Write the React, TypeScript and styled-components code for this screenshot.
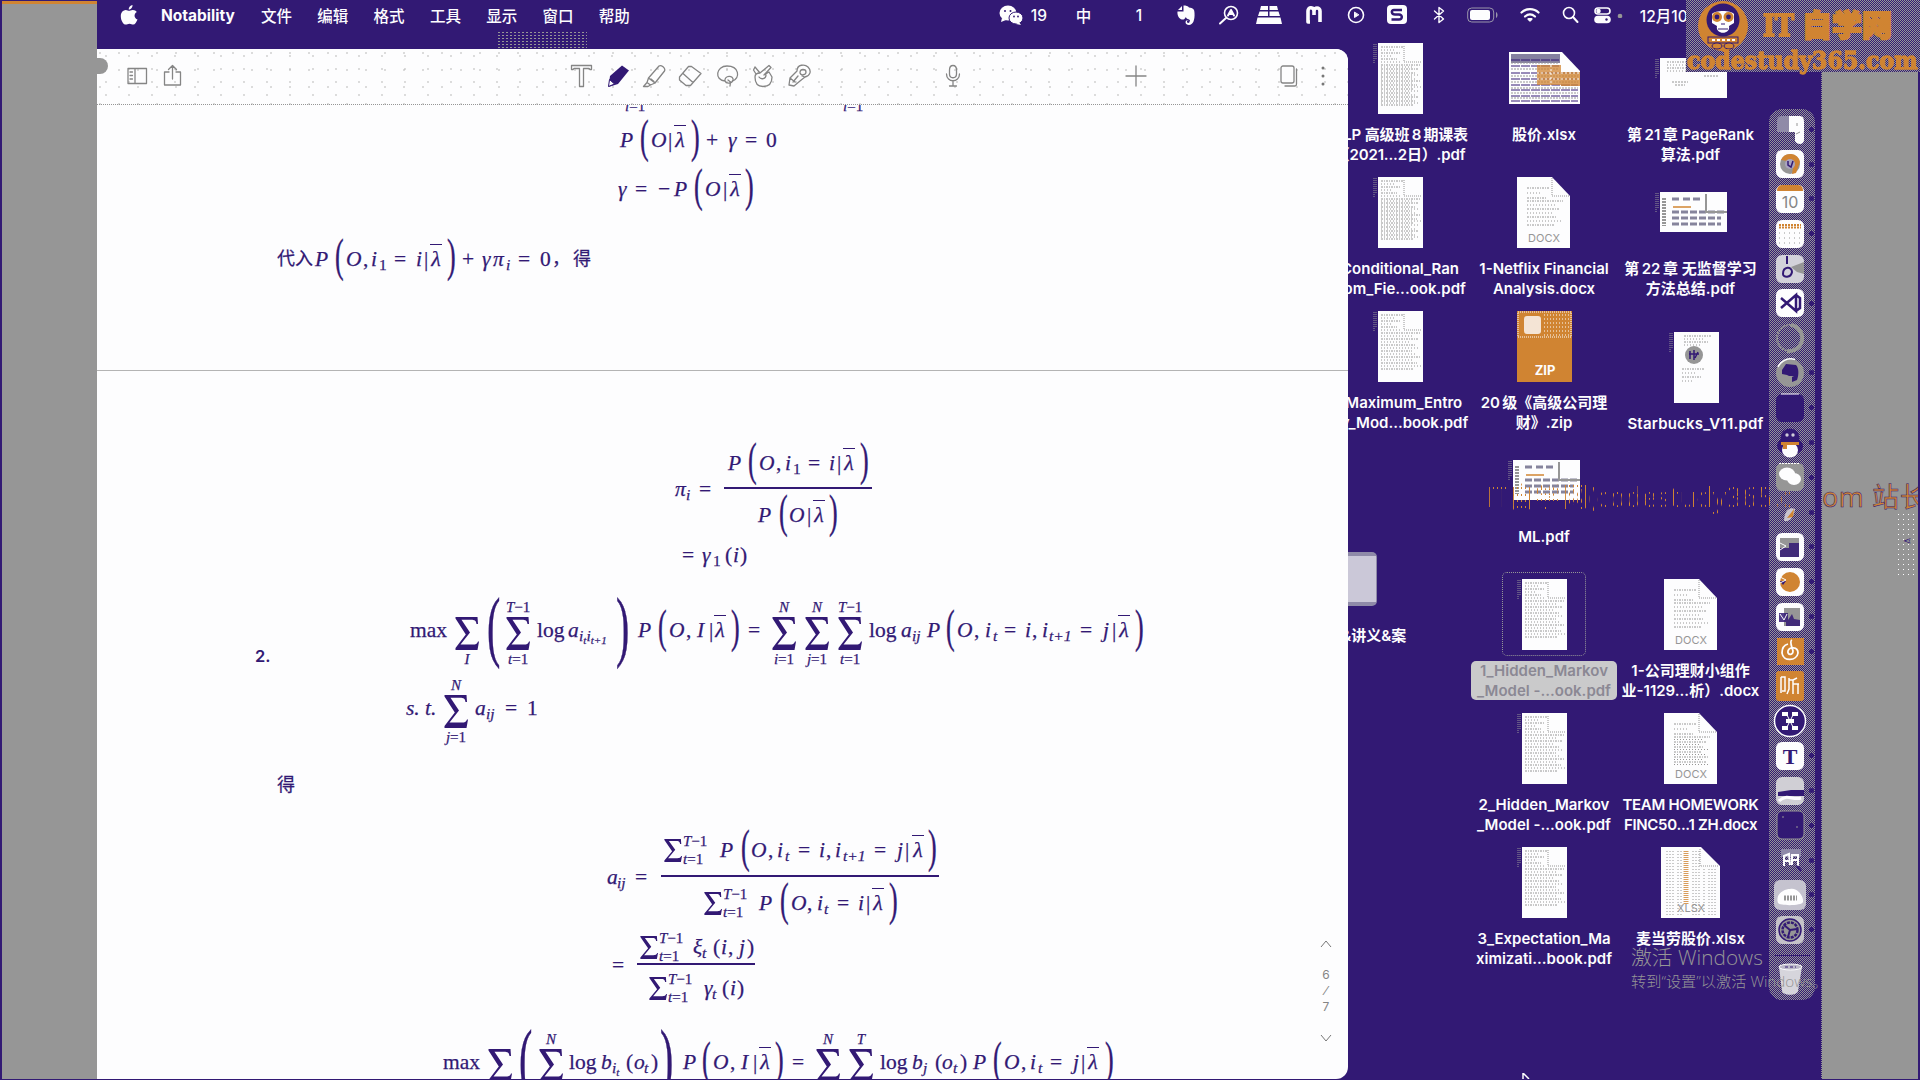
import React from 'react';
import styled, { createGlobalStyle, css } from 'styled-components';

const INK = '#321974';
const GRAY = '#969696';
const PAPER = '#fdfdfe';
const ORANGE = '#d08432';
const checker = `repeating-conic-gradient(${INK} 0 25%, ${GRAY} 0 50%) 0 0 / 2px 2px`;
const UI = `Inter, "Noto Sans CJK SC", "Liberation Sans", sans-serif`;
const MATH = `"Liberation Serif", "Noto Sans CJK SC", serif`;

const Global = createGlobalStyle`
  * { box-sizing: border-box; }
  body { margin: 0; background: ${INK}; overflow: hidden; }
`;

/* ---------- frame ---------- */

const Screen = styled.div`
  position: relative;
  width: 1920px;
  height: 1080px;
  display: flex;
  padding: 1px 2px;
  background: ${INK};
  overflow: hidden;
  font-family: ${UI};
`;
const SideBand = styled.div<{ $w: number; $top?: boolean }>`
  width: ${p => p.$w}px;
  flex: none;
  background: ${GRAY};
  ${p => p.$top ? css`border-top: 3px solid ${ORANGE};` : css`border-left: 1px dotted ${INK};`}
`;
const Desktop = styled.div`
  flex: 1;
  min-width: 0;
  display: flex;
  flex-direction: column;
  background: ${INK};
`;

/* ---------- menu bar ---------- */

const MenuBar = styled.div`
  height: 28px;
  flex: none;
  display: flex;
  align-items: center;
  color: ${PAPER};
  font-size: 15.5px;
  font-weight: 500;
  padding-left: 23px;
`;
const MenuCell = styled.div<{ $w: number; $bold?: boolean }>`
  width: ${p => p.$w}px;
  flex: none;
  display: flex;
  align-items: center;
  white-space: nowrap;
  font-weight: ${p => (p.$bold ? 700 : 500)};
  svg { display: block; flex: none; }
`;

/* ---------- window ---------- */

const Stage = styled.div`
  flex: 1;
  min-height: 0;
  display: flex;
`;
const NotesWindow = styled.div`
  position: relative;
  z-index: 1;
  width: 1251px;
  height: 1030px;
  margin-top: 20px;
  flex: none;
  display: flex;
  flex-direction: column;
  background: ${PAPER};
  border-radius: 0 12px 12px 0;
  overflow: hidden;
`;
const ToolBar = styled.div`
  height: 56px;
  flex: none;
  display: flex;
  align-items: center;
  padding: 0 0 2px 28px;
  border-bottom: 1px dotted ${GRAY};
  background:
    radial-gradient(circle at 3px 4px, #b4b4b4 0.6px, transparent 0.8px) 0 0 / 19px 17px,
    radial-gradient(circle at 9px 7px, #b4b4b4 0.6px, transparent 0.8px) 0 0 / 23px 13px,
    ${PAPER};
`;
const ToolCell = styled.div<{ $w: number }>`
  width: ${p => p.$w}px;
  flex: none;
  svg { display: block; }
`;
const Corner = styled.div`
  position: absolute;
  left: -9px;
  top: 9px;
  width: 20px;
  height: 16px;
  border-radius: 8px;
  background: ${GRAY};
`;
const Paper = styled.div`
  flex: 1;
  min-height: 0;
  overflow: hidden;
  color: ${INK};
  font-family: ${MATH};
  font-size: 22px;
  -webkit-text-stroke: .25px ${INK};
`;
const PageBreak = styled.div`
  margin-top: 96px;
  border-top: 1px solid #b4b4b4;
`;
const Pager = styled.div`
  position: absolute;
  right: 14px;
  bottom: 37px;
  width: 16px;
  height: 102px;
  display: flex;
  flex-direction: column;
  justify-content: space-between;
  align-items: center;
  color: #858585;
  font: 12px/16px ${UI};
`;
const PageCount = styled.div`
  display: flex;
  flex-direction: column;
  align-items: center;
`;

/* ---------- mathematics ---------- */

const Line = styled.div<{ $top: number; $left: number; $h?: number }>`
  margin-top: ${p => p.$top}px;
  padding-left: ${p => p.$left}px;
  height: ${p => p.$h ?? 30}px;
  display: flex;
  align-items: center;
`;
const Cell = styled.span<{ $w: number }>`
  width: ${p => p.$w}px;
  flex: none;
  height: 30px;
  display: flex;
  align-items: center;
  white-space: nowrap;
`;
const Glyph = styled.span<{ $roman?: boolean; $size?: number }>`
  line-height: 30px;
  font-style: ${p => (p.$roman ? 'normal' : 'italic')};
  font-size: ${p => p.$size ?? 21.5}px;
`;
const Lower = styled.span<{ $roman?: boolean; $drop?: number }>`
  line-height: 20px;
  padding-top: ${p => p.$drop ?? 12}px;
  font-size: 15.500px;
  font-style: ${p => (p.$roman ? 'normal' : 'italic')};
`;
const Small = styled.span`
  font-size: 11px;
  display: inline-block;
  transform: translateY(3px);
`;
const Bracket = styled.span<{ $big?: boolean }>`
  line-height: 30px;
  font-size: ${p => (p.$big ? 40 : 26)}px;
  transform: ${p => (p.$big ? 'translateY(-3px) scaleY(1.95)' : 'translateY(-3px) scaleY(1.82)')};
`;
const Overlined = styled.span`
  height: 30px;
  line-height: 28px;
  min-width: 12px;
  text-align: center;
  font-style: italic;
  border-top: 1.5px solid ${INK};
`;
const SumStack = styled.span`
  display: flex;
  flex-direction: column;
  align-items: center;
  min-width: 24px;
  margin-top: 6px;
  flex: none;
`;
const Limit = styled.span`
  height: 15px;
  line-height: 15px;
  font-size: 15px;
  font-style: italic;
`;
const Sigma = styled.svg`
  display: block;
  margin: 2px 0;
  fill: ${INK};
`;
const SideSum = styled.span`
  display: flex;
  align-items: center;
  margin-top: 1px;
`;
const SideLimits = styled.span`
  display: flex;
  flex-direction: column;
  font-size: 15px;
  line-height: 18px;
  font-style: italic;
  margin: -2px 0 0 1px;
`;
const Fraction = styled.span<{ $w: number; $shift?: number }>`
  width: ${p => p.$w}px;
  flex: none;
  display: flex;
  flex-direction: column;
  margin-top: ${p => p.$shift ?? 0}px;
`;
const Part = styled.span<{ $h: number; $pad: number; $bar?: boolean }>`
  height: ${p => p.$h}px;
  padding-left: ${p => p.$pad}px;
  display: flex;
  align-items: center;
  ${p => p.$bar && css`border-bottom: 2px solid ${INK};`}
`;
const Roman = styled.span`font-style: normal;`;
const SansMark = styled.span`
  font: 600 16.500px Inter, sans-serif;
  -webkit-text-stroke: 0;
`;

const SigmaMark = ({ w, h }: { w: number; h: number }) => (
  <Sigma width={w} height={h} viewBox="0 0 24 33" preserveAspectRatio="none">
    <path d="M0.5 0H22.5L23 7H21.5C21 3.500 19.5 2.800 16 2.800H6.500L15 15.5L5.500 27.5H17.5C21 27.5 22 27 23 24.5H24L22.5 33H0.5V31L10.8 17.5L0.5 1.4Z" />
  </Sigma>
);

type Item = [number, React.ReactNode];
const I = (s: string) => <Glyph>{s}</Glyph>;
const R = (s: string) => <Glyph $roman>{s}</Glyph>;
const C = (s: string) => <Glyph $roman $size={18}>{s}</Glyph>;
const S = (s: React.ReactNode) => <Lower>{s}</Lower>;
const SR = (s: string) => <Lower $roman>{s}</Lower>;
const LP = <Bracket>(</Bracket>;
const RP = <Bracket>)</Bracket>;
const LB = <Bracket $big>(</Bracket>;
const RB = <Bracket $big>)</Bracket>;
const LAM = <Overlined>λ</Overlined>;
const Sum = ({ over, under }: { over?: React.ReactNode; under: React.ReactNode }) => (
  <SumStack><Limit>{over}</Limit><SigmaMark w={24} h={33} /><Limit>{under}</Limit></SumStack>
);
const T1 = <>T<Roman>−1</Roman></>;
const eq1 = (v: string) => <>{v}<Roman>=1</Roman></>;
const TSum = (
  <SideSum><SigmaMark w={18} h={23} /><SideLimits><span>{T1}</span><span>{eq1('t')}</span></SideLimits></SideSum>
);

/* Each entry gives the start of a symbol; a cell reaches to the next start. */
const Cells = ({ items }: { items: Item[] }) => (
  <>
    {items.map(([x, node], i) => (
      <Cell key={i} $w={i + 1 < items.length ? items[i + 1][0] - x : 30}>{node}</Cell>
    ))}
  </>
);

const lineA: Item[] = [[620, I('P')], [640, LP], [651, I('O')], [668, R('|')], [674, LAM], [691, RP], [706, R('+')], [728, I('γ')], [745, R('=')], [766, R('0')]];
const lineB: Item[] = [[618, I('γ')], [635, R('=')], [658, R('−')], [674, I('P')], [694, LP], [705, I('O')], [723, R('|')], [729, LAM], [745, RP]];
const lineC: Item[] = [[277, C('代入')], [315, I('P')], [335, LP], [346, I('O')], [363, R(',')], [371, I('i')], [379, SR('1')], [394, R('=')], [416, I('i')], [424, R('|')], [430, LAM], [447, RP], [462, R('+')], [482, I('γ')], [493, I('π')], [506, S('i')], [518, R('=')], [540, R('0')], [552, C('，')], [573, C('得')]];
const numD: Item[] = [[728, I('P')], [748, LP], [759, I('O')], [776, R(',')], [785, I('i')], [793, SR('1')], [808, R('=')], [829, I('i')], [837, R('|')], [843, LAM], [860, RP]];
const denD: Item[] = [[758, I('P')], [779, LP], [789, I('O')], [807, R('|')], [813, LAM], [829, RP]];
const lineE: Item[] = [[682, R('=')], [702, I('γ')], [713, SR('1')], [725, R('(')], [733, I('i')], [740, R(')')]];
const lineF: Item[] = [[410, R('max')], [455, <Sum under="I" />], [487, LB], [506, <Sum over={T1} under={eq1('t')} />], [537, R('log')], [568, I('a')], [579, S(<>i<Small>t</Small>i<Small>t+1</Small></>)], [616, RB], [638, I('P')], [658, LP], [669, I('O')], [686, R(',')], [697, I('I')], [709, R('|')], [714, LAM], [731, RP], [748, R('=')], [772, <Sum over="N" under={eq1('i')} />], [805, <Sum over="N" under={eq1('j')} />], [838, <Sum over={T1} under={eq1('t')} />], [869, R('log')], [901, I('a')], [912, S('ij')], [927, I('P')], [946, LP], [957, I('O')], [974, R(',')], [985, I('i')], [993, S('t')], [1004, R('=')], [1025, I('i')], [1032, R(',')], [1042, I('i')], [1049, S('t+1')], [1080, R('=')], [1103, I('j')], [1112, R('|')], [1118, LAM], [1135, RP]];
const lineG: Item[] = [[406, I('s. t.')], [444, <Sum over="N" under={eq1('j')} />], [475, I('a')], [486, S('ij')], [505, R('=')], [527, R('1')]];
const numH: Item[] = [[664, TSum], [720, I('P')], [741, LP], [751, I('O')], [768, R(',')], [777, I('i')], [785, S('t')], [798, R('=')], [819, I('i')], [826, R(',')], [835, I('i')], [843, S('t+1')], [874, R('=')], [897, I('j')], [905, R('|')], [912, LAM], [928, RP]];
const denH: Item[] = [[704, TSum], [759, I('P')], [780, LP], [791, I('O')], [807, R(',')], [817, I('i')], [824, S('t')], [837, R('=')], [858, I('i')], [866, R('|')], [872, LAM], [889, RP]];
const numI: Item[] = [[640, TSum], [693, I('ξ')], [702, S('t')], [713, R('(')], [721, I('i')], [728, R(',')], [739, I('j')], [747, R(')')]];
const denI: Item[] = [[649, TSum], [704, I('γ')], [712, S('t')], [722, R('(')], [730, I('i')], [737, R(')')]];
const lineJ: Item[] = [[443, R('max')], [488, <Sum under="I" />], [519, LB], [539, <Sum over="N" under={eq1('t')} />], [569, R('log')], [601, I('b')], [612, S(<>i<Small>t</Small></>)], [626, R('(')], [634, I('o')], [644, S('t')], [651, R(')')], [660, RB], [683, I('P')], [702, LP], [713, I('O')], [730, R(',')], [741, I('I')], [753, R('|')], [759, LAM], [775, RP], [792, R('=')], [816, <Sum over="N" under={eq1('j')} />], [849, <Sum over="T" under={eq1('t')} />], [880, R('log')], [912, I('b')], [923, S('j')], [935, R('(')], [942, I('o')], [953, S('t')], [960, R(')')], [973, I('P')], [993, LP], [1004, I('O')], [1021, R(',')], [1030, I('i')], [1038, S('t')], [1050, R('=')], [1073, I('j')], [1081, R('|')], [1087, LAM], [1105, RP]];

const Document = () => (
  <Paper>
    <Line $top={-6} $left={528} $h={14}>
      <Cell $w={218}><Limit>{eq1('i')}</Limit></Cell>
      <Cell $w={40}><Limit>{eq1('i')}</Limit></Cell>
    </Line>
    <Line $top={12} $left={523}><Cells items={lineA} /></Line>
    <Line $top={19} $left={521}><Cells items={lineB} /></Line>
    <Line $top={40} $left={180}><Cells items={lineC} /></Line>
    <PageBreak />
    <Line $top={67} $left={578} $h={102}>
      <Cell $w={11}>{I('π')}</Cell>
      <Cell $w={13}>{S('i')}</Cell>
      <Cell $w={25}>{R('=')}</Cell>
      <Fraction $w={148}>
        <Part $h={51} $pad={4} $bar><Cells items={numD} /></Part>
        <Part $h={51} $pad={34}><Cells items={denD} /></Part>
      </Fraction>
    </Line>
    <Line $top={0} $left={585}><Cells items={lineE} /></Line>
    <Line $top={45} $left={313}><Cells items={lineF} /></Line>
    <Line $top={-4} $left={158} $h={30}><Cell $w={30}><SansMark>2.</SansMark></Cell></Line>
    <Line $top={22} $left={309}><Cells items={lineG} /></Line>
    <Line $top={47} $left={180}><Cell $w={30}>{C('得')}</Cell></Line>
    <Line $top={25} $left={510} $h={104}>
      <Cell $w={10}>{I('a')}</Cell>
      <Cell $w={18}>{S('ij')}</Cell>
      <Cell $w={26}>{R('=')}</Cell>
      <Fraction $w={278}>
        <Part $h={52} $pad={3} $bar><Cells items={numH} /></Part>
        <Part $h={52} $pad={43}><Cells items={denH} /></Part>
      </Fraction>
    </Line>
    <Line $top={21} $left={515}>
      <Cell $w={25}>{R('=')}</Cell>
      <Fraction $w={118} $shift={13}>
        <Part $h={33} $pad={3} $bar><Cells items={numI} /></Part>
        <Part $h={47} $pad={12}><Cells items={denI} /></Part>
      </Fraction>
    </Line>
    <Line $top={67} $left={346}><Cells items={lineJ} /></Line>
  </Paper>
);

/* ---------- toolbar icons ---------- */

const Stroke = ({ w = 24, h = 24, children }: { w?: number; h?: number; children: React.ReactNode }) => (
  <svg width={w} height={h} viewBox={`0 0 ${w} ${h}`} fill="none" stroke="#858585" strokeWidth="1.3" strokeLinejoin="round" strokeLinecap="round">{children}</svg>
);

const Tools = () => (
  <ToolBar>
    <ToolCell $w={36}><Stroke><path d="M3 4.500H21.500V19.500H3ZM10 4.500V19.500M5 8H7.500M5 11.500H7.500M5 15H7.500" /></Stroke></ToolCell>
    <ToolCell $w={409}><Stroke><path d="M8 8H3.500V21H19.500V8H15M11.500 15V2M7.500 5.500L11.500 1.500L15.500 5.500" /></Stroke></ToolCell>
    <ToolCell $w={36}><Stroke><path d="M1.500 1.500H21.500V5.500H20L19 4.500H13.500V22.500H9.500V4.500H4L3 5.500H1.500Z" /></Stroke></ToolCell>
    <ToolCell $w={36}>
      <svg width="24" height="24" viewBox="0 0 24 24"><path d="M16 1.500L23 6.500L12 20L2.500 23L4 12Z" fill={INK} /><path d="M3.500 15.500L8.500 20L2.500 22.500Z" fill={PAPER} stroke={INK} /></svg>
    </ToolCell>
    <ToolCell $w={36}><Stroke><path d="M17 2C19 .5 24 4 22.500 7L13 19L6.500 14ZM6.500 14L5 18.500L8.500 21L13 19M5 18.500L1.500 22.500H6L8.500 21M9 15L12 17.500" /></Stroke></ToolCell>
    <ToolCell $w={38}><Stroke><path d="M13.500 2.500L23 9.500L12.500 21.500H8L1.500 16V13L10.500 2.500ZM5 9.500L15 18.500" /></Stroke></ToolCell>
    <ToolCell $w={36}><Stroke><path d="M9 17C-2 16 0 2 11 2C23 2 25 14 16 17.500M9 17C8 11 18 11 17 16C16 20 10 20 9 17M12 16L14.500 18L14 22" /></Stroke></ToolCell>
    <ToolCell $w={36}><Stroke><path d="M3 3L8 9L17 1.500L19 3.500L12 11L17 8L20 13C20 19 18 22.500 11 22.500C5 22.500 3 18 3 13C3 10 5 9 8 9M3 3L1.500 6L4 10M7 13C9 16 14 15 14 11" /></Stroke></ToolCell>
    <ToolCell $w={153}><Stroke><path d="M9 7C9 0 17 0 20 3C24 7 22 12 17 13L14 12M12 9C12 4 18 5 18 8C18 11 13 12 12 9M9 7L2 14L1 21L6 22L12 17L17 13M2 14L7 18M10 12L5 18" /></Stroke></ToolCell>
    <ToolCell $w={183}><Stroke><path d="M12 1.500C9 1.500 8.500 4 8.500 6V10C8.500 15 15.500 15 15.500 10V6C15.500 3 14.500 1.500 12 1.500ZM5.500 10C5.500 19 18.500 19 18.500 10M12 17V22M8.500 22H15.500" /></Stroke></ToolCell>
    <ToolCell $w={154}><Stroke><path d="M12 2V22M2 12H22" /></Stroke></ToolCell>
    <ToolCell $w={41}><Stroke><rect x="3" y="2" width="13" height="17" rx="2" /><path d="M18.500 5V20C18.500 21.500 18 22 17 22H7" /></Stroke></ToolCell>
    <ToolCell $w={10}><svg width="8" height="24" fill="#777"><circle cx="4" cy="4" r="1.500" /><circle cx="4" cy="12" r="1.500" /><circle cx="4" cy="20" r="1.500" /></svg></ToolCell>
  </ToolBar>
);

/* ---------- menu bar content ---------- */

const AppleMark = () => (
  <svg width="18" height="20" viewBox="0 0 18 20" fill={PAPER}><path d="M12.500 0C12.700 2.500 10.800 4.500 8.700 4.500C8.500 2.300 10.500.3 12.500 0ZM9 5.800C10 5.800 11 4.800 13 4.900C14.500 5 16 5.700 16.800 7C13.500 9 14 13.200 17.500 14.500C16.500 17 15 19.600 13.300 19.600C11.800 19.600 11.300 18.700 9.500 18.700C7.700 18.700 7.200 19.600 5.700 19.600C3.500 19.600.8 15.500.8 11.200C.8 7 3.400 5 5.700 4.900C7.300 4.900 8.300 5.800 9 5.800Z" /></svg>
);
const W = { fill: 'none', stroke: PAPER, strokeWidth: 1.6, strokeLinecap: 'round' as const, strokeLinejoin: 'round' as const };

const TopMenu = () => (
  <MenuBar>
    <MenuCell $w={41}><AppleMark /></MenuCell>
    <MenuCell $w={100} $bold>Notability</MenuCell>
    {['文件', '编辑', '格式', '工具', '显示', '窗口'].map(t => <MenuCell key={t} $w={56.3}>{t}</MenuCell>)}
    <MenuCell $w={400}>帮助</MenuCell>
    <MenuCell $w={32}>
      <svg width="24" height="20" fill={PAPER}><ellipse cx="9" cy="8" rx="8.500" ry="7.500" /><path d="M3 13L2 17L7 15Z" /><ellipse cx="17" cy="13" rx="7" ry="6" stroke={INK} /><path d="M20 17L22 20L17 19Z" /><g fill={INK}><circle cx="6" cy="6" r="1" /><circle cx="11.500" cy="6" r="1" /><circle cx="15" cy="11.500" r=".9" /><circle cx="19" cy="11.500" r=".9" /></g></svg>
    </MenuCell>
    <MenuCell $w={45}>19</MenuCell>
    <MenuCell $w={60}>中</MenuCell>
    <MenuCell $w={40}>1</MenuCell>
    <MenuCell $w={42}>
      <svg width="20" height="20" viewBox="0 0 20 20" fill={PAPER}><path d="M6 1L2 5H6ZM7.500.5V6.500H1.500C1 10 3 14 6 14.500C9 15 9.500 12 10 12C10 14.500 13.500 13.500 14 15.500L13 18L11 17.500V16L13 15.500H10.500C9 16 9 20 13 20C17 20 19 15 18.500 8C18.500 4 17 3 13 2.500C12 1 10 .5 7.500.5Z" /></svg>
    </MenuCell>
    <MenuCell $w={38}><svg width="21" height="20" {...W}><circle cx="13" cy="8" r="6.500" /><path d="M8 13L2 18.500M10 10.500L13 5L16 10.500M11 9H15" strokeWidth="2" /></svg></MenuCell>
    <MenuCell $w={49}><svg width="26" height="20" fill={PAPER}><path d="M5 1H12V5H4ZM13.500 1H21L22 5H13.500ZM3.500 6.500H12V11H2ZM13.500 6.500H22.500L24 11H13.500ZM1.500 12.500H24.500L26 19H0Z" /></svg></MenuCell>
    <MenuCell $w={42}><svg width="18" height="20" {...W} strokeWidth="3.600"><path d="M5 17H3V6C3 1.500 9 2 9 6V10M9 6C9 2 15 2 15 6V17" strokeLinecap="butt" /></svg></MenuCell>
    <MenuCell $w={40}><svg width="18" height="18" {...W}><circle cx="9" cy="9" r="7.500" /><path d="M7.500 6.500V11.500L11.500 9Z" fill={PAPER} strokeWidth="1" /></svg></MenuCell>
    <MenuCell $w={46}><svg width="20" height="20"><rect width="20" height="19" rx="4" fill={PAPER} /><path d="M15 5H7C3.500 5 4.500 9.500 8 9.500H12C16 9.500 15.500 14.500 12 14.500H4.500" fill="none" stroke={INK} strokeWidth="2.500" /></svg></MenuCell>
    <MenuCell $w={34}><svg width="12" height="18" {...W}><path d="M1.500 5L10.500 13L6 16.500V1.500L10.500 5L1.500 13" strokeWidth="1.400" /></svg></MenuCell>
    <MenuCell $w={53}><svg width="32" height="16" fill="none"><rect x=".7" y="1" width="26" height="14" rx="4" stroke="#9a96ab" /><rect x="3" y="3" width="20" height="10" rx="2" fill={PAPER} /><path d="M29 5V11C31 10 31 6 29 5" fill="#9a96ab" /></svg></MenuCell>
    <MenuCell $w={42}><svg width="20" height="16" {...W} strokeWidth="2.200"><path d="M1.500 5.500C6 1 14 1 18.500 5.500M5 9.500C8 7 12 7 15 9.500" /><path d="M8.500 12L10 13.500L11.500 12Z" fill={PAPER} /></svg></MenuCell>
    <MenuCell $w={32}><svg width="17" height="18" {...W}><circle cx="7" cy="7" r="5.500" /><path d="M11 11L15.500 16" strokeWidth="2" /></svg></MenuCell>
    <MenuCell $w={23}><svg width="18" height="18" {...W}><rect x="1" y="2" width="15" height="6" rx="3" /><circle cx="4.500" cy="5" r="1.500" fill={PAPER} /><rect x="1" y="10.500" width="15" height="6" rx="3" fill={PAPER} /><circle cx="12.500" cy="13.500" r="1.200" fill={INK} stroke="none" /></svg></MenuCell>
    <MenuCell $w={23}><svg width="6" height="6"><circle cx="3" cy="4" r="2.300" fill={GRAY} /></svg></MenuCell>
    <MenuCell $w={90}>12月10日</MenuCell>
  </MenuBar>
);

/* ---------- desktop files ---------- */

const Files = styled.div`
  width: 437px;
  flex: none;
  margin: 11px 0 0 -21px;
  display: grid;
  grid-template-columns: 144px 146px 147px;
`;
const Column = styled.div`
  display: flex;
  flex-direction: column;
`;
const Item = styled.div<{ $gap?: number; $shift?: number }>`
  height: 134px;
  margin-top: ${p => p.$gap ?? 0}px;
  margin-left: ${p => (p.$shift ?? 0) * 2}px;
  flex: none;
  display: flex;
  flex-direction: column;
  align-items: center;
`;
const IconBox = styled.div<{ $selected?: boolean }>`
  width: 84px;
  height: 84px;
  margin-top: -4px;
  margin-bottom: 5px;
  flex: none;
  display: flex;
  align-items: center;
  justify-content: center;
  border: 1px dotted ${p => (p.$selected ? GRAY : 'transparent')};
  border-radius: 5px;
`;
const Label = styled.div<{ $selected?: boolean; $track?: number }>`
  flex: none;
  font-size: 15px;
  font-weight: 600;
  line-height: 19.500px;
  letter-spacing: ${p => p.$track ?? 0}px;
  text-align: center;
  white-space: pre;
  color: ${p => (p.$selected ? '#8b8894' : PAPER)};
  background: ${p => (p.$selected ? '#cacacb' : 'transparent')};
  border-radius: 5px;
  padding: 0 6px;
`;

type Kind = 'page' | 'docx' | 'xlsx' | 'sheet' | 'slide' | 'slide2' | 'zip' | 'cover' | 'folder';
const rows = (x: number, y: number, w: number, n: number, step: number) =>
  Array.from({ length: n }, (_, i) => <path key={i} d={`M${x} ${y + i * step}h${w - ((i * 7) % 11)}`} strokeDasharray={i % 2 ? '1 2' : '2 1 1 1'} />);

const Thumb = ({ kind, dense }: { kind: Kind; dense?: boolean }) => {
  const line = { stroke: GRAY, strokeWidth: 1, fill: 'none' };
  switch (kind) {
    case 'page':
      return <svg width="56" height="71"><path d="M2 1V20M4 1V16" {...line} strokeDasharray="1 1" /><rect x="6" width="45" height="71" fill={PAPER} /><g {...line}>{rows(9, 4, 22, 6, 3)}{rows(9, 22, 40, dense ? 21 : 13, dense ? 2 : 3)}<path d="M32 3V19H49" strokeDasharray="1 1" /></g></svg>;
    case 'docx':
      return <svg width="54" height="71"><path d="M0 0H35L53 19V71H0Z" fill={PAPER} /><g {...line}><path d="M35 1V19H52" strokeDasharray="1 1" />{rows(10, 11, 22, 3, 5)}{rows(10, 24, 36, dense ? 12 : 7, dense ? 2.5 : 4)}</g><text x="27" y="65" textAnchor="middle" fontFamily="Inter, sans-serif" fontSize="11" fill={GRAY}>DOCX</text></svg>;
    case 'xlsx':
      return <svg width="59" height="71"><path d="M0 0H40L59 19V71H0Z" fill={PAPER} /><g {...line}>{[6, 9, 12, 17, 20, 32, 35, 38, 43, 48, 51, 54].map(x => <path key={x} d={`M${x} ${x > 38 ? 22 : 4}V68`} strokeDasharray="1 2" />)}<path d="M39 2V19H57" strokeDasharray="1 1" /></g><path d="M25 4V58" stroke={ORANGE} strokeWidth="5" strokeDasharray="1 1" opacity=".8" /><text x="30" y="65" textAnchor="middle" fontFamily="Inter, sans-serif" fontSize="11" fill={GRAY}>XLSX</text></svg>;
    case 'sheet':
      return <svg width="71" height="52"><path d="M0 0H53L71 19V52H0Z" fill={PAPER} /><rect x="2" y="2" width="49" height="9" fill="#8580a0" /><g stroke={INK}>{[8, 14, 21, 27, 33, 38, 44, 49].map(y => <path key={y} d={`M2 ${y}H${y < 18 ? 50 : 69}`} strokeDasharray="9 1" />)}</g><g stroke={GRAY}>{[11, 17, 24, 30, 36, 41, 46].map(y => <path key={y} d={`M2 ${y}H${y < 18 ? 50 : 69}`} strokeDasharray="2 1" />)}</g><rect x="28" y="13" width="24" height="20" fill={ORANGE} opacity=".75" /><rect x="52" y="20" width="19" height="14" fill={ORANGE} opacity=".8" /><path d="M28 21H71M28 27H71M42 13V34" stroke={PAPER} strokeDasharray="2 2" /></svg>;
    case 'slide':
      return <svg width="72" height="40"><path d="M1 1V20M3 1V16" {...line} strokeDasharray="1 1" /><rect x="5" width="67" height="40" fill={PAPER} /><g {...line}>{rows(12, 4, 40, 4, 3)}<path d="M17 24H33M20 27H30M49 18H64" strokeDasharray="2 1" /></g></svg>;
    case 'slide2':
      return <svg width="72" height="40"><path d="M1 1V20M3 1V16" {...line} strokeDasharray="1 1" /><rect x="5" width="67" height="40" fill={PAPER} /><path d="M9 6V34" stroke={GRAY} strokeWidth="4" strokeDasharray="2 1" /><g stroke="#86849c" strokeWidth="3"><path d="M17 7H25M28 7H36M38 7H45M17 20H70M17 26H66M17 32H66" strokeDasharray="7 2" /></g><path d="M18 15H36" stroke={ORANGE} strokeWidth="1.500" /><path d="M51 2V20H72" stroke={GRAY} fill="none" strokeWidth="2" /></svg>;
    case 'zip':
      return <svg width="55" height="71"><rect width="55" height="71" fill={ORANGE} /><path d="M1 1H54V26H1Z" fill="none" stroke={PAPER} strokeDasharray="1 1" /><rect x="7" y="5" width="17" height="18" rx="3" fill={PAPER} opacity=".8" /><g stroke={PAPER} strokeDasharray="1 2">{[4, 8, 12, 16, 20, 24].map(y => <path key={y} d={`M27 ${y}H53`} />)}</g><text x="28" y="64" textAnchor="middle" fontFamily="Inter, sans-serif" fontSize="13" fontWeight="700" fill={PAPER}>ZIP</text></svg>;
    case 'cover':
      return <svg width="56" height="71"><path d="M2 1V20M4 1V16" {...line} strokeDasharray="1 1" /><rect x="6" width="45" height="71" fill={PAPER} /><g {...line}>{rows(16, 4, 28, 4, 3)}{rows(14, 37, 22, 4, 4)}</g><circle cx="26" cy="23" r="9" fill={GRAY} /><path d="M22 19V27M26 18V28M30 20L27 26M21 22H31" stroke={INK} strokeWidth="1.500" /></svg>;
    case 'folder':
      return <svg width="66" height="54"><rect width="66" height="54" rx="5" fill="#8f8aa8" /><rect x="20" y="4" width="45" height="46" fill="#cbc8d8" /></svg>;
  }
};

interface FileProps { kind: Kind; name: string; gap?: number; shift?: number; track?: number; selected?: boolean; dense?: boolean }
const File = ({ kind, name, gap, shift, track, selected, dense }: FileProps) => (
  <Item $gap={gap} $shift={shift}>
    <IconBox $selected={selected}><Thumb kind={kind} dense={dense} /></IconBox>
    <Label $selected={selected} $track={track}>{name}</Label>
  </Item>
);

const DesktopFiles = () => (
  <Files>
    <Column>
      <File kind="page" dense shift={1} track={-0.15} name={'NLP 高级班\u20098\u2009期课表\n（2021...2日）.pdf'} />
      <File kind="page" dense shift={1} name={'Conditional_Ran\ndom_Fie...ook.pdf'} />
      <File kind="page" shift={1} name={'_Maximum_Entro\npy_Mod...book.pdf'} />
      <File kind="folder" gap={99} shift={-55} name={'NLP课件&讲义&案'} />
    </Column>
    <Column>
      <File kind="sheet" name="股价.xlsx" />
      <File kind="docx" name={'1-Netflix Financial\nAnalysis.docx'} />
      <File kind="zip" name={'20\u2009级《高级公司理\n财》.zip'} />
      <File kind="slide2" name="ML.pdf" />
      <File kind="page" selected name={'1_Hidden_Markov\n_Model -...ook.pdf'} />
      <File kind="page" name={'2_Hidden_Markov\n_Model -...ook.pdf'} />
      <File kind="page" name={'3_Expectation_Ma\nximizati...book.pdf'} />
    </Column>
    <Column>
      <File kind="slide" name={'第\u200921\u2009章 PageRank\n算法.pdf'} />
      <File kind="slide2" name={'第\u200922\u2009章 无监督学习\n方法总结.pdf'} />
      <File kind="cover" gap={21} shift={5} track={0.2} name="Starbucks_V11.pdf" />
      <File kind="docx" gap={113} name={'1-公司理财小组作\n业-1129...析）.docx'} />
      <File kind="docx" dense track={-0.3} name={'TEAM HOMEWORK\nFINC50...1 ZH.docx'} />
      <File kind="xlsx" name="麦当劳股价.xlsx" />
    </Column>
  </Files>
);

/* ---------- dock ---------- */

const Dock = styled.div`
  width: 46px;
  height: 891px;
  margin: 80px 0 0 5px;
  flex: none;
  display: flex;
  flex-direction: column;
  padding-top: 3px;
  border-radius: 13px;
  background: ${checker};
`;
const DockSlot = styled.div`
  height: 34.800px;
  flex: none;
  display: flex;
  align-items: center;
  gap: 4px;
  padding-left: 6px;
`;
const Dot = styled.span`
  width: 5px;
  height: 5px;
  border-radius: 50%;
  background: ${INK};
`;
const DockRule = styled.div`
  height: 1px;
  margin: 8px 5px 6px;
  background: ${INK};
`;

const tile = (fill: string) => <rect x="1" y="1" width="28" height="28" rx="6" fill={fill} />;
const dockArt: [React.ReactNode, boolean][] = [
  [<><path d="M2 8C2 3 4 2 8 2H16V18H2Z" fill="#8f8aa8" /><path d="M14 2H24C28 2 29 4 29 8V26C29 31 22 31 20 27V18H14Z" fill={PAPER} /><path d="M22 9V12M25 18L21 20" stroke={GRAY} /></>, true],
  [<>{tile(PAPER)}<circle cx="15" cy="15" r="10" fill={GRAY} /><path d="M6 11A10 10 0 0 1 25 13L21 24L17 25L19 13Z" fill={ORANGE} /><circle cx="15" cy="15" r="5" fill="#a9a4bf" /><path d="M13 12V16L16 18L18 12" stroke={INK} fill="none" strokeWidth="1.500" /></>, true],
  [<>{tile(PAPER)}<path d="M2 7C2 2 5 1 8 1H22C26 1 28 3 28 7Z" fill={ORANGE} /><text x="15" y="23.500" textAnchor="middle" fontFamily="Inter, sans-serif" fontSize="16" fill="#858585">10</text></>, true],
  [<>{tile(PAPER)}<path d="M4 6H26M4 8.500H26" stroke={ORANGE} strokeWidth="2" strokeDasharray="2 1" /><path d="M4 14H26M4 19H26M4 24H26" stroke={GRAY} strokeDasharray="1 4" /></>, true],
  [<>{tile('#d3d2da')}<path d="M16 13L29 8V20L22 18Z" fill={GRAY} /><path d="M12 2V10M8 20C8 12 17 12 17 18C16 24 8 24 8 20" stroke={INK} strokeWidth="2" fill="none" /></>, false],
  [<>{tile(PAPER)}<path d="M6 10L21 23V7L6 20M21 7L25 10V20L21 23" fill="none" stroke={INK} strokeWidth="2.500" /></>, true],
  [<><circle cx="15" cy="15" r="13" fill="none" stroke={GRAY} strokeWidth="2" strokeDasharray="2 1" /><path d="M16 2A13 13 0 1 1 12 28" fill="none" stroke={GRAY} strokeWidth="4" /></>, false],
  [<><circle cx="15" cy="15" r="14" fill={GRAY} /><path d="M3 9A14 14 0 0 1 20 1.500" fill="none" stroke={PAPER} strokeWidth="1.500" /><path d="M7 12L11 6L21 7C24 10 24 17 22 22L17 24V19L19 18H14L12 17L7 16Z" fill={INK} /></>, true],
  [<>{tile(INK)}<path d="M6 1H24" stroke={PAPER} /></>, true],
  [<><ellipse cx="15" cy="18" rx="13" ry="9" fill={INK} /><circle cx="15" cy="10" r="9.500" fill={INK} /><ellipse cx="15" cy="22" rx="8" ry="7.500" fill={PAPER} /><path d="M6 14H24V17H12V21H8V17H6Z" fill={ORANGE} /><circle cx="12" cy="7" r="1.700" fill="#cfcdd8" /><circle cx="18" cy="7" r="1.700" fill="#cfcdd8" /></>, true],
  [<>{tile(GRAY)}<path d="M4 1.500H25" stroke={PAPER} strokeDasharray="2 1" /><ellipse cx="12" cy="12" rx="8" ry="6.500" fill={PAPER} /><ellipse cx="19" cy="17" rx="7" ry="6" fill={PAPER} /></>, true],
  [<><path d="M9 24C9 15 14 9 20 12C19 20 15 25 9 24" fill="#c9c4cf" /><path d="M12 21L19 12L18 20Z" fill={ORANGE} /></>, true],
  [<>{tile(PAPER)}<rect x="5" y="6" width="19" height="19" fill={GRAY} /><path d="M5 16H14V11H24V25H5Z" fill={INK} opacity=".85" /><path d="M5 11L11 14L5 18" stroke={PAPER} fill="none" /></>, true],
  [<>{tile(PAPER)}<circle cx="15" cy="15" r="10" fill={ORANGE} /><path d="M5 14H11L8 18Z" fill={INK} /><path d="M5 10L11 13L5 16" fill="none" stroke={PAPER} /></>, true],
  [<>{tile(PAPER)}<rect x="9" y="6" width="16" height="18" fill={GRAY} /><path d="M4 11H13V18L17 12L19 17L25 18V24H11V20H4Z" fill={INK} opacity=".85" /><path d="M5 12L9 18L12 12" stroke={PAPER} fill="none" /></>, true],
  [<><rect x="2" y="2" width="27" height="27" fill={ORANGE} /><path d="M17 4C14 5 17 11 18 15C18 20 12 19 13 15C14 11 23 10 23 17C22 25 8 26 7 17C7 12 9 9 13 8" fill="none" stroke={PAPER} strokeWidth="1.800" /></>, true],
  [<><rect x="1" width="28" height="30" rx="3" fill={ORANGE} /><path d="M6 6V22M6 6H10V20H7M14 7V18L12 23M14 9H18M22 7L18 9V23M18 13H24M23 13V23" fill="none" stroke={PAPER} strokeWidth="1.500" /></>, false],
  [<><circle cx="15" cy="15" r="15.500" fill={INK} stroke={PAPER} strokeWidth="1.500" /><path d="M7 8H13M17 8H23M11 15H19M7 22H13M17 22H23" stroke={PAPER} strokeWidth="4" /><path d="M12 9L18 21M18 9L12 21" stroke={PAPER} /></>, false],
  [<>{tile(PAPER)}<text x="15" y="22.500" textAnchor="middle" fontFamily="Liberation Serif, serif" fontWeight="700" fontSize="22" fill={INK}>T</text></>, true],
  [<>{tile('#d0cfd5')}<path d="M3 16L16 14H29V20H3Z" fill={INK} /><path d="M4 25C12 17 18 25 26 22" stroke={PAPER} strokeWidth="3" fill="none" /></>, true],
  [<><rect x="2" y="1" width="27" height="28" rx="5" fill={INK} stroke={GRAY} /><path d="M8 8V6M22 16V18" stroke={GRAY} /></>, true],
  [<><path d="M6 4H26V12H6Z" fill="#8f8aa8" /><path d="M9 21V11L14 9L15 20M9 16H15M17 20V10H23V15H18M23 15V21" stroke={PAPER} strokeWidth="2" fill="none" /><path d="M22 21L26 26" stroke={INK} strokeWidth="2.500" /></>, true],
  [<><rect x="-1" width="32" height="30" rx="6" fill="#c5c3cf" /><path d="M3 23C0 14 9 9 15 9C21 7 29 15 28 22C27 26 5 26 3 23Z" fill={PAPER} /><path d="M9 18H22" stroke={GRAY} strokeWidth="5" strokeDasharray="2 1" /></>, true],
  [<>{tile('#c5c3c9')}<circle cx="15" cy="15" r="11" fill={GRAY} stroke={INK} strokeWidth="1.500" /><circle cx="15" cy="15" r="7.500" fill="none" stroke={INK} strokeWidth="2.500" strokeDasharray="3 1" /><path d="M15 15L9 10M15 15L13 22M15 15L22 14" stroke={INK} strokeWidth="2" fill="none" /></>, true],
];

const DockBar = () => (
  <Dock>
    {dockArt.map(([art, dot], i) => (
      <DockSlot key={i}><svg width="30" height="30" overflow="visible">{art}</svg>{dot && <Dot />}</DockSlot>
    ))}
    <DockRule />
    <DockSlot><svg width="30" height="34" overflow="visible"><path d="M4 4L7 28C8 33 22 33 23 28L27 4Z" fill="#d6d5dc" /><ellipse cx="15.500" cy="4" rx="11.500" ry="3" fill="#bbb8c8" stroke={PAPER} /><path d="M10 4H21" stroke={INK} strokeDasharray="3 2" /></svg></DockSlot>
  </Dock>
);

/* ---------- overlays ---------- */

const Brand = styled.div`
  position: absolute;
  z-index: 3;
  left: 1686px;
  top: 0;
  width: 234px;
  height: 72px;
  background: ${checker};
  color: ${ORANGE};
`;
const BrandTop = styled.div`
  height: 51px;
  display: flex;
  align-items: center;
  padding: 1px 0 0 11px;
  gap: 14px;
`;
const BrandName = styled.div`
  font: 900 30px/34px "DejaVu Serif", "Noto Sans CJK SC", serif;
  white-space: nowrap;
  display: flex;
  -webkit-text-stroke: 2px ${ORANGE};
`;
const BrandLatin = styled.span`
  width: 39px;
  font-size: 29px;
  transform: scaleX(.88);
  transform-origin: left;
`;
const BrandUrl = styled.div`
  font: 700 24.500px/20px "DejaVu Serif", serif;
  white-space: nowrap;
  -webkit-text-stroke: 1.300px ${ORANGE};
  transform: scaleX(.905);
  transform-origin: left;
  padding-left: 1px;
`;
const Ticker = styled.div`
  position: absolute;
  z-index: 2;
  left: 1485px;
  top: 478px;
  width: 433px;
  height: 40px;
  overflow: hidden;
  white-space: pre;
  font: 400 27px/38px "Open Sans", "Noto Sans CJK SC", sans-serif;
  display: flex;
`;
const TickerFaint = styled.span`
  width: 337px;
  flex: none;
  color: transparent;
  background: repeating-linear-gradient(90deg, ${ORANGE} 0 1px, transparent 1px 4px);
  -webkit-background-clip: text;
  background-clip: text;
`;
const TickerSolid = styled.span`
  color: ${ORANGE};
  letter-spacing: .6px;
  -webkit-text-stroke: .5px ${INK};
`;
const Activate = styled.div<{ $small?: boolean }>`
  position: absolute;
  z-index: 2;
  left: 1631px;
  top: ${p => (p.$small ? 968 : 943)}px;
  font: 300 ${p => (p.$small ? '15.200px/26px' : '20.800px/28px')} "Open Sans", "Noto Sans CJK SC", sans-serif;
  color: ${GRAY};
  white-space: nowrap;
`;
const SideTab = styled.div`
  position: absolute;
  left: 1896px;
  top: 512px;
  width: 22px;
  height: 66px;
  background: radial-gradient(circle, ${PAPER} .8px, transparent 1px) 0 0 / 5px 5px;
  color: ${INK};
  font: 10px/56px ${UI};
  text-align: center;
`;
const Pointer = styled.svg`
  position: absolute;
  left: 1522px;
  top: 1073px;
`;
const Shade = styled.div`
  position: absolute;
  left: 497px;
  top: 31px;
  width: 90px;
  height: 17px;
  background: radial-gradient(circle, ${GRAY} .6px, transparent .8px) 0 0 / 4px 3px;
`;

const Monkey = () => (
  <svg width="52" height="50" viewBox="0 0 52 50">
    <circle cx="26" cy="25" r="25" fill={ORANGE} />
    <circle cx="26" cy="19" r="16.500" fill={INK} />
    <path d="M15 13C18 9 34 9 37 13V22L32 25C34 34 18 34 20 25L15 22Z" fill={PAPER} />
    <circle cx="20" cy="16" r="5" fill={ORANGE} /><circle cx="31.500" cy="16" r="5" fill={ORANGE} />
    <circle cx="20" cy="16" r="2.400" fill={INK} /><circle cx="31.500" cy="16" r="2.400" fill={INK} />
    <path d="M21 28H31M25 22V24M27 22V24" stroke={INK} />
    <rect x="11" y="36" width="30" height="6" fill={ORANGE} stroke={INK} />
    <path d="M15 39H38" stroke={PAPER} strokeWidth="2" strokeDasharray="3 2" />
    <ellipse cx="20" cy="45" rx="5" ry="3" fill={ORANGE} stroke={INK} /><ellipse cx="32" cy="45" rx="5" ry="3" fill={ORANGE} stroke={INK} />
  </svg>
);

export default function App() {
  return (
    <>
      <Global />
      <Screen>
        <SideBand $w={95} $top />
        <Desktop>
          <TopMenu />
          <Stage>
            <NotesWindow>
              <Tools />
              <Document />
              <Corner />
              <Pager>
                <svg width="12" height="8" fill="none" stroke="#777"><path d="M1 7L6 1L11 7" /></svg>
                <PageCount><span>6</span><span>⁄</span><span>7</span></PageCount>
                <svg width="12" height="8" fill="none" stroke="#777"><path d="M1 1L6 7L11 1" /></svg>
              </Pager>
            </NotesWindow>
            <DesktopFiles />
            <DockBar />
          </Stage>
        </Desktop>
        <SideBand $w={97} />
        <Shade />
        <SideTab>⋖</SideTab>
        <Activate>激活 Windows</Activate>
        <Activate $small>转到“设置”以激活 Windows。</Activate>
        <Ticker><TickerFaint>IT自学网(codestudy365.c</TickerFaint><TickerSolid>om 站长</TickerSolid></Ticker>
        <Brand>
          <BrandTop><Monkey /><BrandName><BrandLatin>IT</BrandLatin>自学网</BrandName></BrandTop>
          <BrandUrl>codestudy365.com</BrandUrl>
        </Brand>
        <Pointer width="8" height="6"><path d="M1 0L7 6M1 0V6" stroke={PAPER} strokeWidth="1.500" /></Pointer>
      </Screen>
    </>
  );
}
